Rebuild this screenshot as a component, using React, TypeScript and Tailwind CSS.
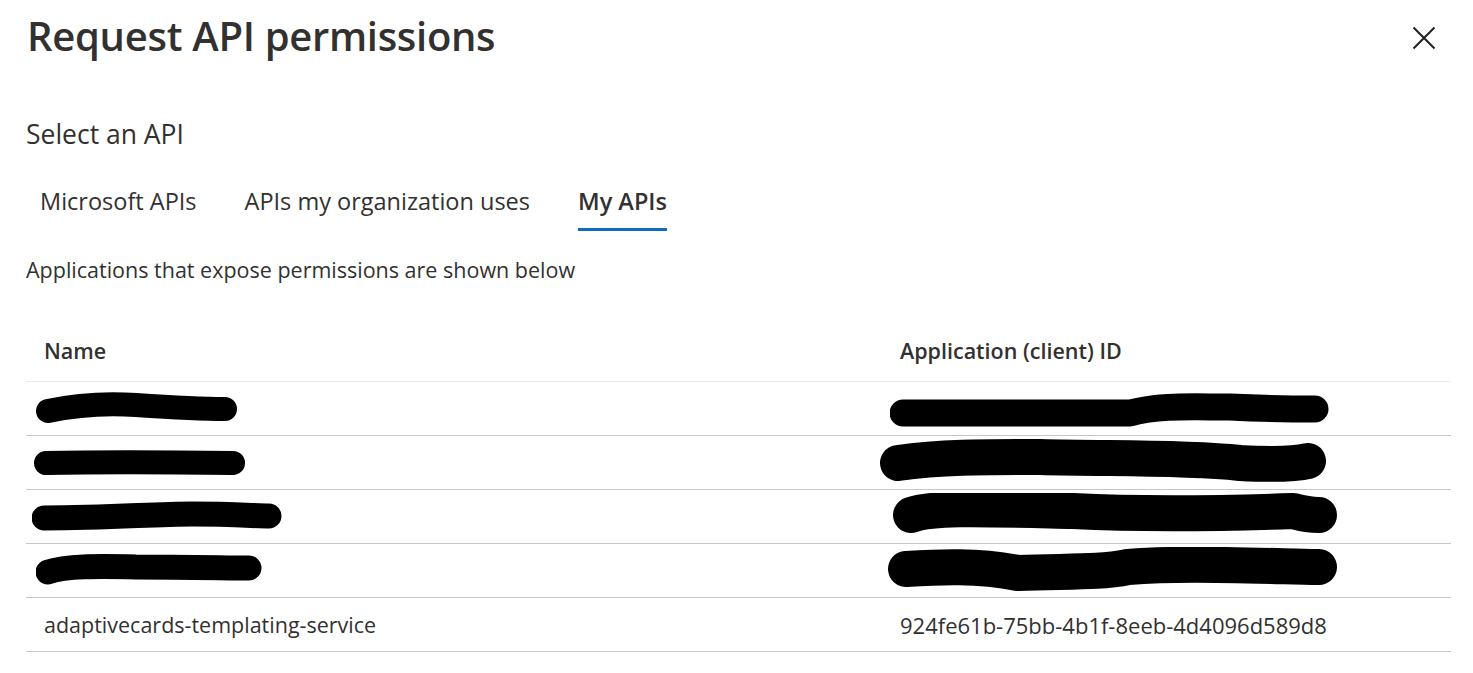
type Scribble = { w: number; h: number; d: string; sw: number };

const NAME_MARKS: Scribble[] = [
  { w: 210, h: 36, sw: 24, d: "M12 20 C40 14 70 12 100 14 C130 16 160 18 189 18" },
  { w: 220, h: 30, sw: 24, d: "M12 15 C60 14 120 14 199 15" },
  { w: 260, h: 34, sw: 25, d: "M12 18 C80 18 120 14 160 14 C200 14 225 16 237 16" },
  { w: 235, h: 34, sw: 25, d: "M12 18 C30 12 60 12 100 13 C150 13 195 14 213 14" },
];

const ID_MARKS: Scribble[] = [
  { w: 450, h: 36, sw: 27, d: "M13 22 C80 22 160 22 240 22 C270 14 300 16 340 16 C380 18 405 18 425 18" },
  { w: 455, h: 48, sw: 36, d: "M18 24 C60 18 100 18 160 18 C230 20 300 18 360 24 C400 26 420 24 428 22" },
  { w: 455, h: 48, sw: 36, d: "M18 22 C40 14 90 16 180 18 C260 22 340 20 400 18 C415 22 422 22 426 22" },
  { w: 460, h: 48, sw: 36, d: "M18 22 C50 20 90 18 130 26 C180 24 210 26 240 20 C290 16 340 18 431 20" },
];

function Mark({ m, left }: { m: Scribble; left: number }) {
  return (
    <svg
      width={m.w}
      height={m.h}
      viewBox={`0 0 ${m.w} ${m.h}`}
      className="absolute top-1/2 -translate-y-1/2"
      style={{ left }}
    >
      <path d={m.d} fill="none" stroke="#000" strokeWidth={m.sw} strokeLinecap="round" strokeLinejoin="round" />
    </svg>
  );
}

export default function App() {
  const redacted = [0, 1, 2, 3];
  const nameLeft = [10, 8, 6, 10];
  const idLeft = [8, -2, 11, 6];

  return (
    <div className="w-[1473px] h-[673px] bg-white text-[#323130] font-['Open_Sans',sans-serif] overflow-hidden">
      {/* Header */}
      <div className="flex items-start justify-between pl-[27px] pr-[37px] pt-[12px]">
        <h1 className="text-[40px] leading-[48px] font-semibold tracking-[-0.3px]">
          Request API permissions
        </h1>
        <button className="mt-[14px] w-[24px] h-[24px] flex items-center justify-center text-[#201f1e]">
          <svg width="24" height="24" viewBox="0 0 24 24">
            <path d="M1.5 1.5 L22.5 22.5 M22.5 1.5 L1.5 22.5" stroke="currentColor" strokeWidth="2" fill="none" />
          </svg>
        </button>
      </div>

      <div className="px-[26px]">
        <div className="mt-[57px] text-[26.5px] leading-[34px]">Select an API</div>

        {/* Tabs */}
        <div className="mt-[35px] flex items-end pl-[14px] gap-[48px] text-[23.5px] leading-[30px]">
          <div className="pb-[12px] border-b-[3px] border-transparent">Microsoft APIs</div>
          <div className="pb-[12px] border-b-[3px] border-transparent">APIs my organization uses</div>
          <div className="pb-[12px] border-b-[3px] border-[#0f6cbd] font-semibold">My APIs</div>
        </div>

        <div className="mt-[25px] text-[21.5px] leading-[28px]">
          Applications that expose permissions are shown below
        </div>

        {/* Table */}
        <div className="mt-[38px] w-[1425px] text-[21.5px]">
          <div className="flex h-[60px] items-center border-b border-[#edebe9] font-semibold">
            <div className="w-[856px] pl-[18px]">Name</div>
            <div className="flex-1 pl-[18px]">Application (client) ID</div>
          </div>
          {redacted.map((i) => (
            <div key={i} className="flex h-[54px] items-center border-b border-[#c8c6c4]">
              <div className="relative w-[856px] h-full">
                <Mark m={NAME_MARKS[i]} left={nameLeft[i]} />
              </div>
              <div className="relative flex-1 h-full">
                <Mark m={ID_MARKS[i]} left={idLeft[i]} />
              </div>
            </div>
          ))}
          <div className="flex h-[54px] items-center border-b border-[#c8c6c4]">
            <div className="w-[856px] pl-[18px] pt-[2px]">adaptivecards-templating-service</div>
            <div className="flex-1 pl-[18px] pt-[2px] text-[22px]">924fe61b-75bb-4b1f-8eeb-4d4096d589d8</div>
          </div>
        </div>
      </div>
    </div>
  );
}
